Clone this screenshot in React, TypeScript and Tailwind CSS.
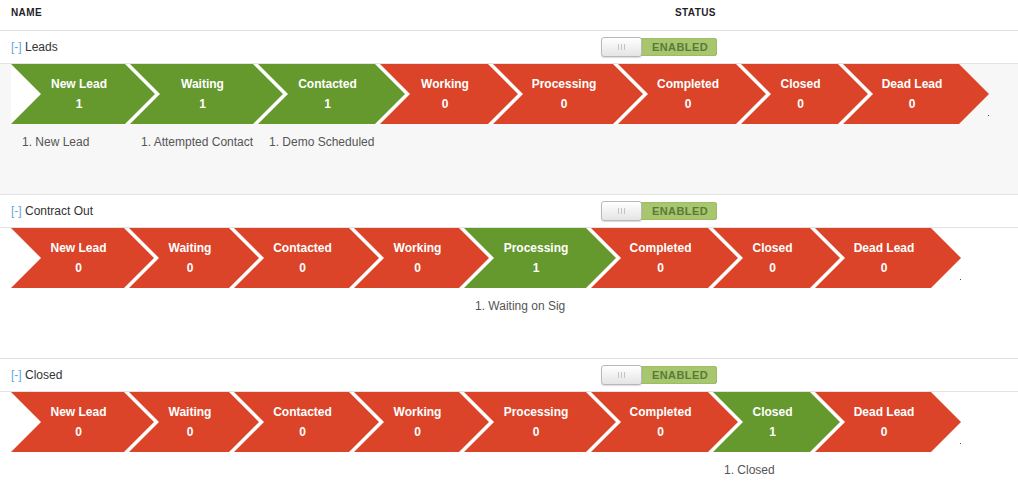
import React from "react";

type Row = {
  name: string;
  bg: string;
  widths: number[];
  counts: number[];
  details: Record<number, string>;
};

const STAGES = [
  "New Lead",
  "Waiting",
  "Contacted",
  "Working",
  "Processing",
  "Completed",
  "Closed",
  "Dead Lead",
];

const W2 = [113, 100, 115, 105, 122, 117, 97, 116];

const ROWS: Row[] = [
  {
    name: "Leads",
    bg: "bg-[#f7f7f7]",
    widths: [114, 123, 117, 108, 120, 118, 97, 116],
    counts: [1, 1, 1, 0, 0, 0, 0, 0],
    details: { 0: "1. New Lead", 1: "1. Attempted Contact", 2: "1. Demo Scheduled" },
  },
  {
    name: "Contract Out",
    bg: "bg-white",
    widths: W2,
    counts: [0, 0, 0, 0, 1, 0, 0, 0],
    details: { 4: "1. Waiting on Sig" },
  },
  {
    name: "Closed",
    bg: "bg-white",
    widths: W2,
    counts: [0, 0, 0, 0, 0, 0, 1, 0],
    details: { 6: "1. Closed" },
  },
];

function Toggle() {
  return (
    <div className="flex items-center">
      <div className="relative z-10 flex h-[20px] w-[41px] items-center justify-center gap-[2px] rounded-[3px] border border-[#b8b8b8] bg-gradient-to-b from-white to-[#e4e4e4] shadow-[0_1px_1px_rgba(0,0,0,0.15)]">
        <span className="h-[6px] w-px bg-[#c4c4c4]" />
        <span className="h-[6px] w-px bg-[#c4c4c4]" />
        <span className="h-[6px] w-px bg-[#c4c4c4]" />
      </div>
      <div className="-ml-px flex h-[18px] w-[76px] items-center justify-center rounded-r-[2px] border border-[#9dbd62] bg-[#a7c66d] pl-[2px] text-[11px] font-bold leading-none tracking-[0.4px] text-[#5b7a39]">
        ENABLED
      </div>
    </div>
  );
}

function Chevron({ label, count, width }: { label: string; count: number; width: number }) {
  const color = count > 0 ? "bg-[#65992d]" : "bg-[#db4428]";
  return (
    <div
      className={`${color} h-[60px] shrink-0 pl-[22px] pr-[30px] pt-[10px] text-center text-[12px] font-bold leading-[20px] text-white [clip-path:polygon(0_0,calc(100%_-_30px)_0,100%_50%,calc(100%_-_30px)_100%,0_100%,30px_50%)]`}
      style={{ width: width + 30 }}
    >
      <div className="whitespace-nowrap">{label}</div>
      <div>{count}</div>
    </div>
  );
}

function Pipeline({ row }: { row: Row }) {
  return (
    <div className={`${row.bg} h-[131px] border-b border-[#e3e3e3] pl-[11px]`}>
      <div className="flex items-start">
        {STAGES.map((s, i) => {
          const last = i === STAGES.length - 1;
          const colW = row.widths[i] + (last ? 0 : 5);
          return (
            <div key={s} className="shrink-0" style={{ width: colW }}>
              <div className="h-[60px] bg-white">
                <Chevron label={s} count={row.counts[i]} width={row.widths[i]} />
              </div>
              {row.details[i] && (
                <div className="mt-[11px] whitespace-nowrap pl-[11px] text-[12px] leading-[14px] text-[#555]">
                  {row.details[i]}
                </div>
              )}
            </div>
          );
        })}
        <div className="ml-[29px] mt-[51px] h-px w-px shrink-0 bg-[#a3331f]" />
      </div>
    </div>
  );
}

export default function App() {
  return (
    <div className="h-[500px] w-[1018px] overflow-hidden bg-white font-['Liberation_Sans',Arial,sans-serif]">
      <div className="flex h-[31px] border-b border-[#e3e3e3] pt-[7px] text-[10px] font-bold leading-[12px] tracking-[0.4px] text-[#1f1f2b]">
        <div className="w-[675px] pl-[11px]">NAME</div>
        <div>STATUS</div>
      </div>
      {ROWS.map((row) => (
        <div key={row.name}>
          <div className="flex h-[33px] items-center border-b border-[#e3e3e3]">
            <div className="w-[601px] pl-[11px] text-[12px] text-[#333]">
              <span className="text-[#5ea6e0]">[-]</span> {row.name}
            </div>
            <Toggle />
          </div>
          <Pipeline row={row} />
        </div>
      ))}
    </div>
  );
}
